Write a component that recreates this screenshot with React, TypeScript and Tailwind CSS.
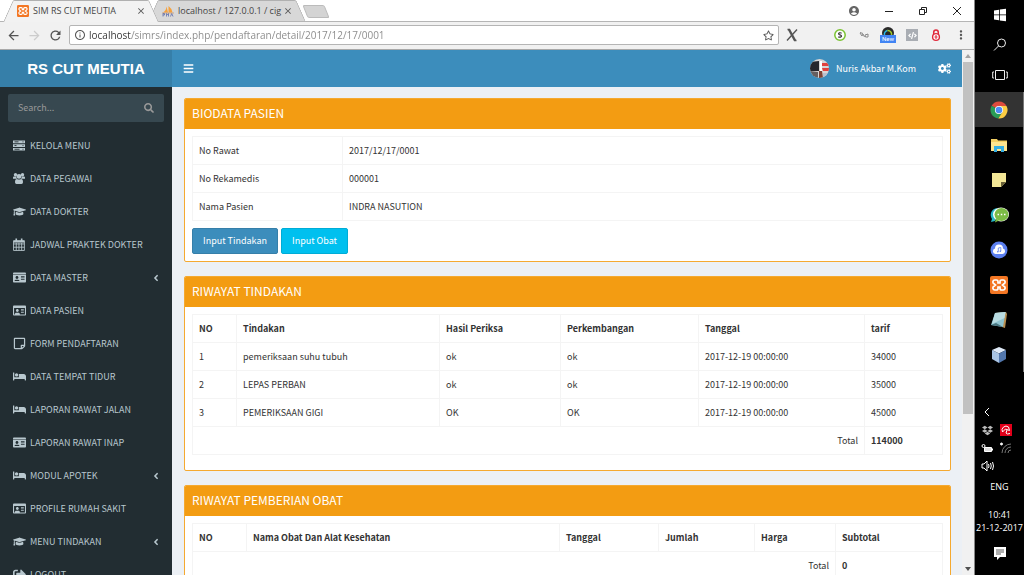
import type { ReactNode } from 'react';
import type { IconType } from 'react-icons';
import {
  FaBed, FaCode, FaCogs, FaDropbox, FaGraduationCap, FaIdCard, FaRegIdCard, FaRegStickyNote,
  FaSearch, FaSignOutAlt, FaBars, FaAngleLeft, FaRegStar,
} from 'react-icons/fa';
import { MdAccountCircle, MdArrowBack, MdArrowForward, MdInfoOutline, MdMoreVert, MdRefresh, MdClose } from 'react-icons/md';

// ── Data ──
const MENU: Array<{ label: string; icon: IconType | typeof CalendarGrid; sub?: boolean }> = [
  { label: 'KELOLA MENU', icon: ServerIcon },
  { label: 'DATA PEGAWAI', icon: UsersIcon },
  { label: 'DATA DOKTER', icon: FaGraduationCap },
  { label: 'JADWAL PRAKTEK DOKTER', icon: CalendarGrid },
  { label: 'DATA MASTER', icon: FaIdCard, sub: true },
  { label: 'DATA PASIEN', icon: FaRegIdCard },
  { label: 'FORM PENDAFTARAN', icon: FaRegStickyNote },
  { label: 'DATA TEMPAT TIDUR', icon: FaBed },
  { label: 'LAPORAN RAWAT JALAN', icon: FaBed },
  { label: 'LAPORAN RAWAT INAP', icon: FaIdCard },
  { label: 'MODUL APOTEK', icon: FaBed, sub: true },
  { label: 'PROFILE RUMAH SAKIT', icon: FaRegIdCard },
  { label: 'MENU TINDAKAN', icon: FaGraduationCap, sub: true },
  { label: 'LOGOUT', icon: FaSignOutAlt },
];

const BIODATA = [
  ['No Rawat', '2017/12/17/0001'],
  ['No Rekamedis', '000001'],
  ['Nama Pasien', 'INDRA NASUTION'],
];

const TINDAKAN = [
  ['1', 'pemeriksaan suhu tubuh', 'ok', 'ok', '2017-12-19 00:00:00', '34000'],
  ['2', 'LEPAS PERBAN', 'ok', 'ok', '2017-12-19 00:00:00', '35000'],
  ['3', 'PEMERIKSAAN GIGI', 'OK', 'OK', '2017-12-19 00:00:00', '45000'],
];

const CELL = 'h-[28px] border border-[#f4f4f4] px-[6px] py-0 text-left';

export default function App() {
  return (
    <div className="flex h-screen w-full overflow-hidden bg-black font-['Noto_Sans_CJK_SC','Source_Sans_Pro',sans-serif] text-[9px] leading-[14px] text-[#333]">
      <div className="flex min-w-0 flex-1 flex-col border-r border-[#888] bg-white">
        <TabStrip />
        <Toolbar />
        <div className="flex min-h-0 flex-1">
          <div className="flex min-w-0 flex-1 flex-col">
            <TopNav />
            <div className="flex min-h-0 flex-1">
              <Sidebar />
              <Content />
            </div>
          </div>
          <Scrollbar />
        </div>
      </div>
      <Taskbar />
    </div>
  );
}

// ── Browser chrome ──
function Tab({ active, icon, title }: { active?: boolean; icon: ReactNode; title: string }) {
  const fill = active ? 'bg-[#f2f2f2]' : 'bg-[#d8d8d8]';
  return (
    <div className={active ? 'relative z-10 -mb-px h-[22px] w-[145px]' : 'relative h-[21px] w-[147px]'}>
      <span className={`absolute inset-y-0 left-0 w-1/2 -skew-x-[24deg] rounded-tl-[2px] border-t border-l border-[#b0b0b0] ${fill}`} />
      <span className={`absolute inset-y-0 right-0 w-1/2 skew-x-[24deg] rounded-tr-[2px] border-t border-r border-[#b0b0b0] ${fill}`} />
      <span className={`absolute inset-x-[16px] inset-y-0 border-t border-[#b0b0b0] ${fill}`} />
      <div className="relative flex h-full items-center gap-[4px] pr-[7px] pl-[9px]">
        {icon}
        <button className="min-w-0 flex-1 text-left whitespace-nowrap">{title}</button>
        <button aria-label="Close tab" className="text-[#555]"><MdClose size={10} /></button>
      </div>
    </div>
  );
}

function TabStrip() {
  return (
    <div className="flex h-[22px] shrink-0 items-end border-b border-[#b5b5b5] pr-[12px] pl-[8px] font-['Open_Sans',sans-serif] text-[#444]">
      <Tab active icon={<XamppLogo size={12} />} title="SIM RS CUT MEUTIA" />
      <Tab icon={<PmaLogo />} title="localhost / 127.0.0.1 / cig" />
      <button aria-label="New tab" className="mb-[3px] ml-[5px] h-[13px] w-[22px] skew-x-[22deg] rounded-[2px] border border-[#bbb] bg-[#d4d4d4]" />
      <div className="ml-auto flex h-full items-center gap-[24px] text-[#222]">
        <button aria-label="Profile" className="text-[#666]"><MdAccountCircle size={12} /></button>
        <button aria-label="Minimize">
          <svg width="10" height="10" viewBox="0 0 10 10"><path d="M1 5.500h8" stroke="currentColor" /></svg>
        </button>
        <button aria-label="Restore">
          <svg width="10" height="10" viewBox="0 0 10 10" fill="none" stroke="currentColor"><path d="M1.500 3.500h5v5h-5zM3.500 3.500v-2h5v5h-2" /></svg>
        </button>
        <button aria-label="Close">
          <svg width="10" height="10" viewBox="0 0 10 10"><path d="M1 1l8 8M9 1l-8 8" stroke="currentColor" /></svg>
        </button>
      </div>
    </div>
  );
}

function Toolbar() {
  return (
    <div className="flex h-[28px] shrink-0 items-center border-b border-[#a9a9a9] bg-[#f1f1f1] pr-[6px] pl-[6px] pb-px text-[#555]">
      <div className="flex gap-[6px]">
        <button aria-label="Back"><MdArrowBack size={15} /></button>
        <button aria-label="Forward" className="text-[#ccc]"><MdArrowForward size={15} /></button>
        <button aria-label="Reload"><MdRefresh size={15} /></button>
      </div>
      <div className="ml-[6px] flex h-[20px] min-w-0 flex-1 items-center gap-[3px] rounded-xs border border-[#b5b5b5] bg-white px-[4px]">
        <MdInfoOutline size={12} />
        <input
          aria-label="Address"
          defaultValue="localhost/simrs/index.php/pendaftaran/detail/2017/12/17/0001"
          className="min-w-0 flex-1 bg-[linear-gradient(90deg,#333_42px,#888_42px)] bg-clip-text font-['Open_Sans',sans-serif] text-[10px] text-transparent outline-none"
        />
        <FaRegStar size={11} />
      </div>
      <div className="ml-[7px] flex items-center text-[#555]">
        <svg width="12" height="14" viewBox="0 0 12 14"><path d="M3 1.500l6 11" stroke="#555" strokeWidth="2.400" /><path d="M11 1.500L1 12.500M1.500 1.500H4M8 12.500h2.500" stroke="#555" strokeWidth="1.400" /></svg>
        <div className="ml-[36px] flex items-center gap-[12px]">
          <svg width="12" height="12" viewBox="0 0 12 12" fill="none"><circle cx="6" cy="6" r="5.200" stroke="#7ac231" strokeWidth="1.500" fill="#fff" /><path d="M7.600 4.200C6 3.200 4.400 4 4.600 5c.2 1 2.800.8 2.900 2 .1 1-1.700 1.700-3.200.7" stroke="#333" strokeWidth="1.200" /></svg>
          <svg width="12" height="12" viewBox="0 0 12 12" fill="none" stroke="#888"><path d="M2 4l2 3 1-2 1.500 3M7 6l3-1v3H7.500zM2 3.500l3 1" /></svg>
          <span className="relative -mx-[2px] h-[16px] w-[16px]">
            <svg width="16" height="16" viewBox="0 0 16 16"><circle cx="8" cy="6" r="6" fill="#292929" /><path d="M4.500 8a3.700 3.700 0 0 1 3-4.500" stroke="#27b9e8" strokeWidth="1.500" fill="none" /><path d="M7.500 3.500A3.700 3.700 0 0 1 11.500 8" stroke="#a4cf2d" strokeWidth="1.500" fill="none" /></svg>
            <span className="absolute inset-x-0 bottom-0 h-[8px] bg-[#4285f4] text-center font-['Roboto',sans-serif] text-[6px] leading-[8px] text-white">New</span>
          </span>
          <span className="flex h-[12px] w-[12px] items-center justify-center bg-[#a9adb3] text-white"><FaCode size={9} /></span>
          <svg width="12" height="13" viewBox="0 0 12 13" fill="none"><path d="M3.700 6V3.400a2.300 2.300 0 0 1 4.600 0V6" stroke="#e0293b" strokeWidth="1.500" /><circle cx="6" cy="8" r="3.400" fill="#fff" stroke="#e0293b" strokeWidth="1.400" /><path d="M6 6v4M4.500 8h3" stroke="#e0293b" /></svg>
          <button aria-label="Menu"><MdMoreVert size={14} /></button>
        </div>
      </div>
    </div>
  );
}

function Scrollbar() {
  return (
    <div className="flex w-[12px] shrink-0 flex-col items-center bg-[#f1f1f1]">
      <svg className="my-[4px]" width="6" height="4" viewBox="0 0 6 4"><path d="M0 4l3-4 3 4z" fill="#a3a3a3" /></svg>
      <div className="h-[67%] w-[10px] bg-[#c1c1c1]" />
      <svg className="mt-auto mb-[4px]" width="6" height="4" viewBox="0 0 6 4"><path d="M0 0l3 4 3-4z" fill="#505050" /></svg>
    </div>
  );
}

// ── Application shell ──
function TopNav() {
  return (
    <header className="flex h-[37px] shrink-0 bg-[#3c8dbc] text-white">
      <a href="#home" className="flex w-[172px] shrink-0 items-center justify-center bg-[#367fa9] font-['Liberation_Sans',sans-serif] text-[15px] font-bold">
        RS CUT MEUTIA
      </a>
      <div className="flex flex-1 items-center pr-[11px] pl-[11px]">
        <button aria-label="Toggle navigation"><FaBars size={11} /></button>
        <a href="#user" className="ml-auto flex items-center gap-[7px]">
          <Avatar />
          Nuris Akbar M.Kom
        </a>
        <button aria-label="Settings" className="ml-[22px]"><FaCogs size={13} /></button>
      </div>
    </header>
  );
}

function Sidebar() {
  return (
    <aside className="w-[172px] shrink-0 overflow-hidden bg-[#222d32] text-[#b8c7ce]">
      <form className="mx-[8px] mt-[7px] mb-[7px] flex h-[28px] items-center rounded-xs bg-[#374850] px-[10px] text-[#999]">
        <input aria-label="Search" placeholder="Search..." className="min-w-0 flex-1 bg-transparent outline-none placeholder:text-[#999]" />
        <button type="button" aria-label="Submit search"><FaSearch size={10} /></button>
      </form>
      <nav>
        {MENU.map(({ label, icon: Icon, sub }) => (
          <a key={label} href="#menu" className="flex h-[33px] items-center pr-[11px] pl-[13px]">
            <span className="w-[17px] shrink-0"><Icon size={13} /></span>
            <span className="flex-1 whitespace-nowrap">{label}</span>
            {sub && <FaAngleLeft size={10} />}
          </a>
        ))}
      </nav>
    </aside>
  );
}

function Box({ title, children }: { title: string; children: ReactNode }) {
  return (
    <section className="mb-[14px] overflow-hidden rounded-xs border border-[#f5a930] bg-white">
      <h3 className="bg-[#f39c12] px-[7px] pt-[4px] pb-[6px] text-[12px] leading-[20px] text-white">{title}</h3>
      <div className="p-[7px]">{children}</div>
    </section>
  );
}

function Content() {
  return (
    <main className="min-w-0 flex-1 overflow-hidden bg-[#ecf0f5] pt-[11px] pr-[11px] pl-[12px]">
      <Box title="BIODATA PASIEN">
        <table className="w-full table-fixed border-collapse">
          <tbody>
            {BIODATA.map(([name, value]) => (
              <tr key={name}>
                <th scope="row" className={`${CELL} w-[150px] font-normal`}>{name}</th>
                <td className={CELL}>{value}</td>
              </tr>
            ))}
          </tbody>
        </table>
        <div className="mt-[7px] flex gap-[3px] text-white">
          <button className="h-[26px] rounded-xs border border-[#367fa9] bg-[#3c8dbc] px-[10px]">Input Tindakan</button>
          <button className="h-[26px] rounded-xs border border-[#00acd6] bg-[#00c0ef] px-[10px]">Input Obat</button>
        </div>
      </Box>

      <Box title="RIWAYAT TINDAKAN">
        <table className="mb-[8px] w-full table-fixed border-collapse">
          <thead>
            <tr>
              <th className={`${CELL} w-[44px]`}>NO</th>
              <th className={CELL}>Tindakan</th>
              <th className={`${CELL} w-[121px]`}>Hasil Periksa</th>
              <th className={`${CELL} w-[138px]`}>Perkembangan</th>
              <th className={`${CELL} w-[166px]`}>Tanggal</th>
              <th className={`${CELL} w-[78px]`}>tarif</th>
            </tr>
          </thead>
          <tbody>
            {TINDAKAN.map((row) => (
              <tr key={row[0]}>
                {row.map((value, i) => <td key={i} className={CELL}>{value}</td>)}
              </tr>
            ))}
            <tr>
              <td colSpan={5} className="h-[28px] border border-[#f4f4f4] px-[6px] text-right">Total</td>
              <td className={`${CELL} font-bold`}>114000</td>
            </tr>
          </tbody>
        </table>
      </Box>

      <Box title="RIWAYAT PEMBERIAN OBAT">
        <table className="mb-[8px] w-full table-fixed border-collapse">
          <thead>
            <tr>
              <th className={`${CELL} w-[54px]`}>NO</th>
              <th className={CELL}>Nama Obat Dan Alat Kesehatan</th>
              <th className={`${CELL} w-[99px]`}>Tanggal</th>
              <th className={`${CELL} w-[96px]`}>Jumlah</th>
              <th className={`${CELL} w-[81px]`}>Harga</th>
              <th className={`${CELL} w-[107px]`}>Subtotal</th>
            </tr>
          </thead>
          <tbody>
            <tr>
              <td colSpan={5} className="h-[28px] border border-[#f4f4f4] px-[6px] text-right">Total</td>
              <td className={`${CELL} font-bold`}>0</td>
            </tr>
          </tbody>
        </table>
      </Box>
    </main>
  );
}

// ── Windows taskbar ──
function TaskItem({ label, active, running, children }: { label: string; active?: boolean; running?: boolean; children: ReactNode }) {
  return (
    <button aria-label={label} className={`flex h-[35px] w-full items-center justify-center border-r ${active ? 'border-[#777] bg-[#333]' : running ? 'border-[#777]' : 'border-black'}`}>
      {children}
    </button>
  );
}

function Taskbar() {
  return (
    <aside className="flex w-[49px] shrink-0 flex-col items-center bg-black font-['Open_Sans',sans-serif] text-[9px] leading-[13px] text-white">
      <div className="flex h-[92px] flex-col items-center justify-between pt-[8px] pb-[10px]">
        <button aria-label="Start">
          <svg width="14" height="14" viewBox="0 0 14 14" fill="#fff"><path d="M1 2.500l5-.8v4.800H1zM6.800 1.500L13 .7v5.800H6.800zM1 7.300h5v4.900l-5-.8zM6.800 7.300H13v6l-6.200-.9z" /></svg>
        </button>
        <button aria-label="Search">
          <svg width="14" height="14" viewBox="0 0 14 14" fill="none" stroke="#eee"><circle cx="8.500" cy="5" r="4" /><path d="M5.500 8L1 12.500" /></svg>
        </button>
        <button aria-label="Task view">
          <svg width="16" height="14" viewBox="0 0 16 14" fill="none" stroke="#eee"><path d="M3.500 2.500h9v9h-9zM2 4H.7v6H2M14 4h1.300v6H14" /></svg>
        </button>
      </div>
      <TaskItem label="Chrome" active>
        <svg width="18" height="18" viewBox="0 0 18 18">
          <path d="M9 9L1.640 4.750A8.500 8.500 0 0 1 16.500 5H9z" fill="#dd4b3e" />
          <path d="M9 9l-7.360-4.250A8.500 8.500 0 0 0 8.300 17.500L12.500 11z" fill="#2a9d57" />
          <path d="M9 5h7.500A8.500 8.500 0 0 1 8.300 17.500L12.500 11z" fill="#fccd43" />
          <circle cx="9" cy="9" r="4.100" fill="#fff" /><circle cx="9" cy="9" r="3.300" fill="#4b8bf5" />
        </svg>
      </TaskItem>
      <TaskItem label="File Explorer" running>
        <svg width="18" height="16" viewBox="0 0 18 16"><path d="M1 2h6l1 1.500h9V14H1z" fill="#f3cf63" /><path d="M1 5h16v9H1z" fill="#fde48f" /><path d="M4 15V9h10v6h-3v-3H7v3z" fill="#35aee2" /></svg>
      </TaskItem>
      <TaskItem label="Sticky Notes" running>
        <svg width="16" height="16" viewBox="0 0 16 16"><path d="M1 1h14v9l-5 5H1z" fill="#f3e796" /><path d="M15 10h-5v5z" fill="#6b6238" /></svg>
      </TaskItem>
      <TaskItem label="Chat" running>
        <svg width="19" height="16" viewBox="0 0 19 16"><path d="M7 1a7 7 0 0 0-5 11l-1 3 4-1z" fill="#25b5c4" /><ellipse cx="11" cy="7.500" rx="8" ry="7" fill="#fff" /><ellipse cx="11.500" cy="7.500" rx="7" ry="6.500" fill="#7cbb45" /><path d="M6 11l-1 4.500 4-2z" fill="#7cbb45" /><path d="M7.500 7.500h1.500M10.800 7.500h1.500M14 7.500h1.500" stroke="#fff" strokeWidth="1.500" /></svg>
      </TaskItem>
      <TaskItem label="Cloud music" running>
        <svg width="18" height="18" viewBox="0 0 18 18"><circle cx="9" cy="9" r="8.500" fill="#5b7ff0" /><path d="M5.500 13a2.800 2.800 0 0 1-.5-5.500 4 4 0 0 1 8 0 2.800 2.800 0 0 1-.5 5.500z" fill="#fff" /><path d="M8.300 10.500V7l2.500-.5v3.500" stroke="#5b7ff0" strokeWidth=".8" fill="none" /><circle cx="7.800" cy="10.700" r=".8" fill="#5b7ff0" /><circle cx="10.300" cy="10.200" r=".8" fill="#5b7ff0" /></svg>
      </TaskItem>
      <TaskItem label="XAMPP" running><XamppLogo size={18} /></TaskItem>
      <TaskItem label="Notepad" running>
        <svg width="18" height="18" viewBox="0 0 18 18"><path d="M5 2l11-1 1 2-2 14-3-1z" fill="#b88e50" /><path d="M5 2l10.500-1L13 16 1 14z" fill="#8ec3cf" /><path d="M5 2l10.500-1-1 6L2 13z" fill="#b9dce2" /><path d="M1 14l5-2 7 4z" fill="#487580" /></svg>
      </TaskItem>
      <TaskItem label="VirtualBox" running>
        <svg width="16" height="18" viewBox="0 0 16 18"><path d="M8 1l7 3-7 3.500L1 4z" fill="#dfeaf8" /><path d="M1 4l7 3.500V17l-7-4z" fill="#a9c4e4" /><path d="M15 4L8 7.500V17l7-4z" fill="#5277ad" /></svg>
      </TaskItem>
      <div className="mt-auto flex flex-col items-center">
        <div className="grid grid-cols-2 place-items-center gap-x-[6px] gap-y-[6px] pr-[6px]">
          <button aria-label="Show hidden icons">
            <svg width="12" height="12" viewBox="0 0 12 12"><path d="M8 2L4 6l4 4" stroke="#fff" fill="none" /></svg>
          </button>
          <span />
          <FaDropbox size={11} className="text-[#bbb]" />
          <svg width="12" height="12" viewBox="0 0 12 12"><path d="M0 0h12v12H0z" fill="#e2001a" /><path d="M2.500 8A4 4 0 0 1 8.500 3l1 3.500-4-1.500zM7 6L6 9l1.500 1 2.500-.5" stroke="#fff" fill="none" /></svg>
          <svg width="12" height="12" viewBox="0 0 12 12"><path d="M3.500 5.500h7v4h-7z" fill="#ddd" stroke="#fff" /><path d="M11.500 6.500v2" stroke="#fff" /><circle cx="2.500" cy="4" r="1.500" fill="none" stroke="#fff" /></svg>
          <svg width="12" height="12" viewBox="0 0 12 12" fill="none" stroke="#777"><path d="M2 11a9 9 0 0 1 9-9M5 11a6 6 0 0 1 6-6M8 11a3 3 0 0 1 3-3" /><circle cx="1.500" cy="2" r="1" fill="#fff" stroke="#fff" /></svg>
          <svg width="13" height="12" viewBox="0 0 13 12" fill="none" stroke="#fff"><path d="M1 4h2l3-3v10L3 8H1zM7.500 4q1 2 0 4M9.500 3q1.500 3 0 6M11.500 2q2 4 0 8" /></svg>
        </div>
        <span className="mt-[8px]">ENG</span>
        <time className="mt-[15px] text-center whitespace-nowrap">10:41<br />21-12-2017</time>
        <button aria-label="Notifications" className="mt-[12px] mb-[15px]">
          <svg width="14" height="14" viewBox="0 0 14 14"><path d="M1 1h12v10H7l-3 3v-3H1z" fill="#fff" /><path d="M3 4h8M3 6h8M3 8h5" stroke="#333" strokeWidth=".8" /></svg>
        </button>
      </div>
    </aside>
  );
}

// ── Drawings ──
function ServerIcon({ size = 12 }: { size?: number }) {
  return (
    <svg width={size} height={size} viewBox="0 0 13 13" fill="currentColor">
      <path d="M0 1.500h12v2.700H0zM0 5.200h12v2.700H0zM0 8.900h12v2.700H0z" />
      <path d="M1.500 2.850h4M1.500 6.550h2M1.500 10.250h5M9.500 2.850h1M9.500 6.550h1M9.500 10.250h1" stroke="#222d32" strokeWidth=".9" />
    </svg>
  );
}

function UsersIcon({ size = 12 }: { size?: number }) {
  return (
    <svg width={size} height={size} viewBox="0 0 13 13" fill="currentColor">
      <circle cx="2.500" cy="2.700" r="1.700" /><circle cx="9.500" cy="2.700" r="1.700" /><circle cx="6" cy="4.400" r="2.400" />
      <path d="M0 6.800V5.500q0-1 1-1h2.200q.2 1.800 1 2.300zM12 6.800V5.500q0-1-1-1H8.800q-.2 1.800-1 2.300zM2 10.300Q2 7 4 7q2 1 4 0 2 0 2 3.300 0 1.700-1.500 1.700h-5Q2 12 2 10.300z" />
    </svg>
  );
}

function CalendarGrid({ size = 12 }: { size?: number }) {
  return (
    <svg width={size} height={size} viewBox="0 0 12 12" fill="none" stroke="currentColor">
      <path d="M.5 2.500h10v9H.500zM.5 5.500h10M.5 8.500h10M3 4.500v7M5.500 4.500v7M8 4.500v7" strokeWidth=".8" />
      <path d="M.5 3.300h10" strokeWidth="1.800" />
      <path d="M3 .5v2.500M8 .5v2.500" strokeWidth="1.500" />
    </svg>
  );
}

function XamppLogo({ size }: { size: number }) {
  return (
    <svg width={size} height={size} viewBox="0 0 18 18" className="shrink-0">
      <rect width="18" height="18" rx="2" fill="#f37623" />
      <path d="M6.500 4H5a2 2 0 0 0-1 3.800L5.500 9 4 10.200A2 2 0 0 0 5 14h1.500a1.500 1.500 0 0 0 1.500-1.500V11h2v1.500a1.500 1.500 0 0 0 1.500 1.500H13a2 2 0 0 0 1-3.800L12.500 9 14 7.800A2 2 0 0 0 13 4h-1.500A1.500 1.500 0 0 0 10 5.500V7H8V5.500A1.500 1.500 0 0 0 6.500 4z" fill="none" stroke="#fff" strokeWidth="1.700" />
    </svg>
  );
}

function PmaLogo() {
  return (
    <svg width="12" height="12" viewBox="0 0 12 12" className="shrink-0">
      <path d="M1 7.500Q4 6 4.500 1.500L6 7.500zM6.500 7.500V1q3 2 4 6.500z" fill="#f5a13c" />
      <path d="M0 8h12" stroke="#c98b4d" strokeWidth=".6" />
      <path d="M1 11.500v-3h1.500v1.500H1M4.500 11.500v-3l1 1.500 1-1.500v3M8.500 11.500l1.200-3 1.300 3" fill="none" stroke="#6c78af" strokeWidth=".9" />
    </svg>
  );
}

function Avatar() {
  return (
    <svg width="19" height="19" viewBox="0 0 19 19">
      <clipPath id="avatar"><circle cx="9.500" cy="9.500" r="9.500" /></clipPath>
      <g clipPath="url(#avatar)">
        <path d="M0 0h19v19H0z" fill="#d8d5d5" />
        <path d="M0 3l9-1v10H0z" fill="#26262c" />
        <path d="M0 12l8 1v6H3z" fill="#655f60" />
        <path d="M12 4h7v3h-7zM12 9h7v3h-6z" fill="#e2413e" />
        <path d="M10 2h2v10h-2z" fill="#fff" />
        <path d="M9 12h3l1 7H9z" fill="#7d4335" />
        <path d="M13 14h6v5h-6z" fill="#b9bfcd" />
      </g>
    </svg>
  );
}
